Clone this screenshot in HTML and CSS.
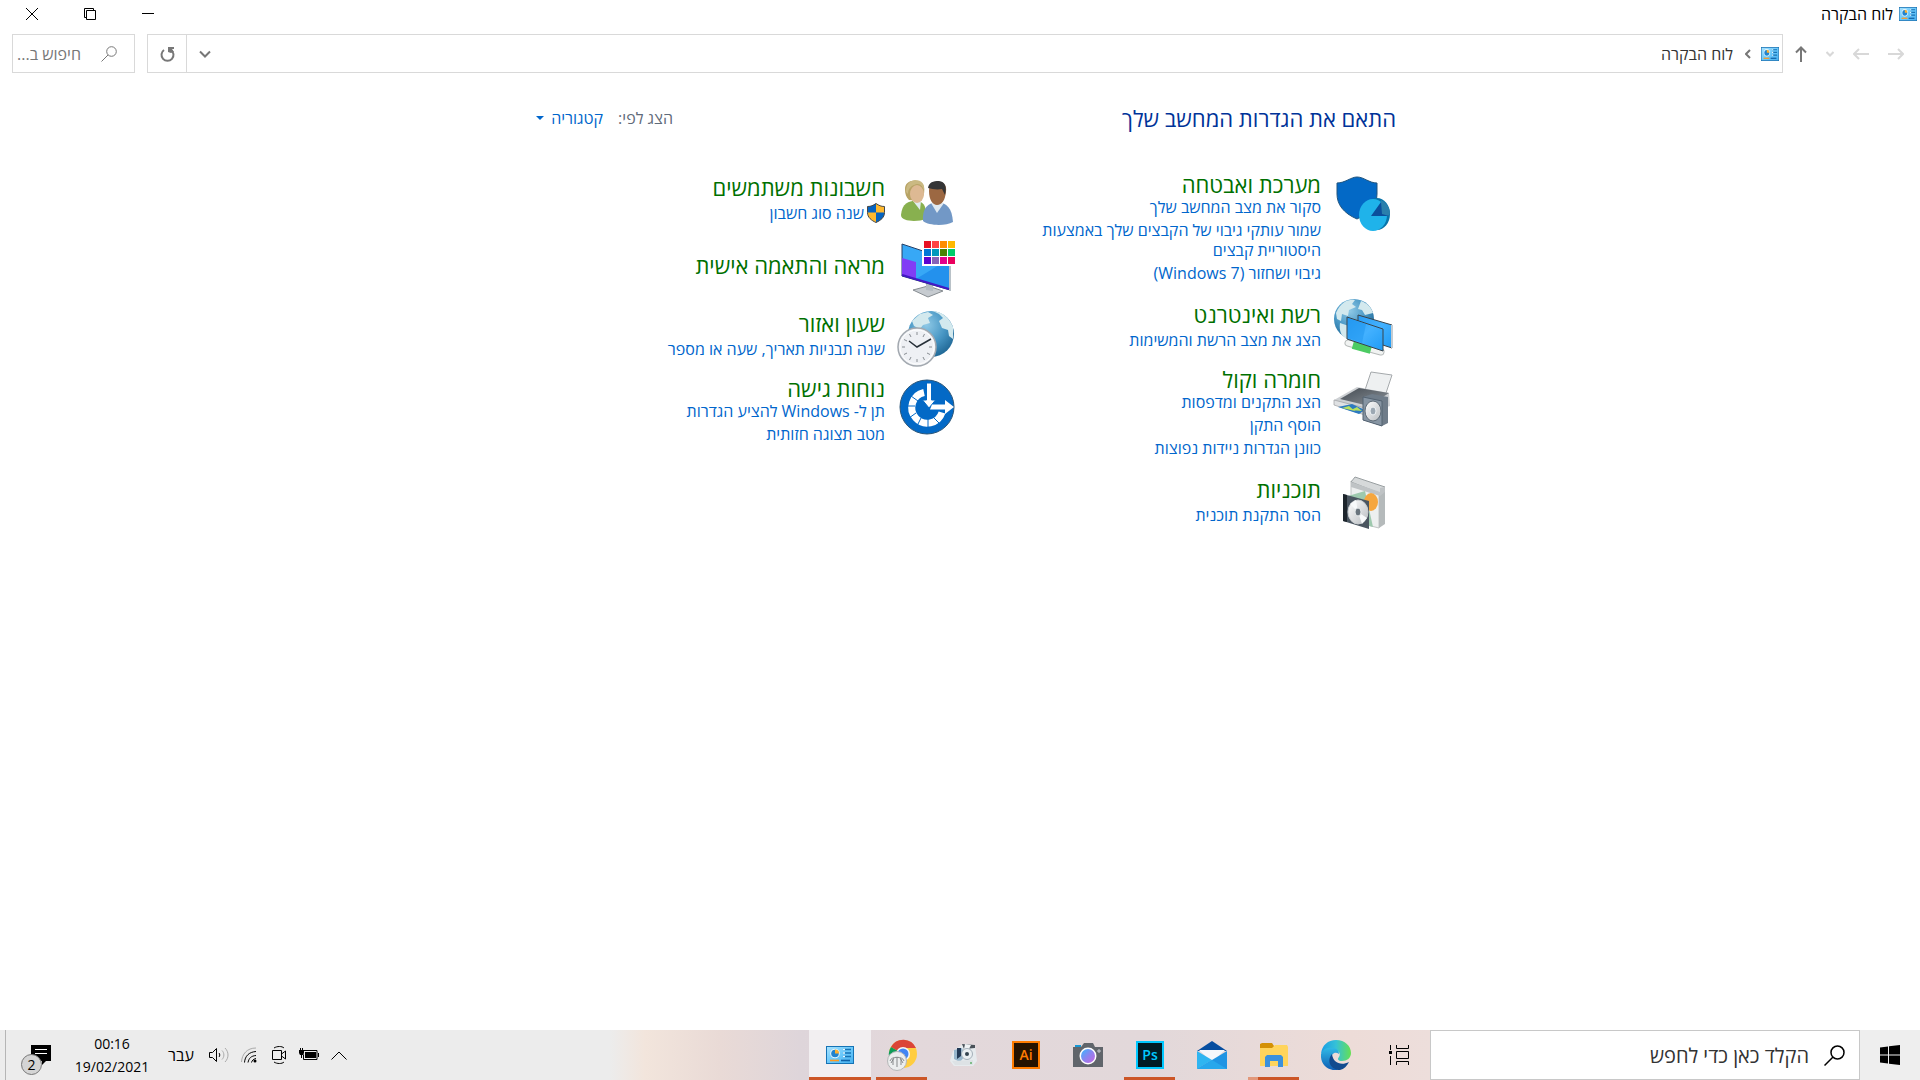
FILE: index.html
```
<!DOCTYPE html>
<html lang="he" dir="rtl">
<head>
    <meta charset="UTF-8">
    <meta name="viewport" content="width=device-width, initial-scale=1.0">
    <title>לוח הבקרה</title>
    <link rel="stylesheet" href="styles.css">
</head>
<body>
    <!-- Shared icons and gradients -->
    <svg class="defs" aria-hidden="true">
        <defs>
            <linearGradient id="panelBlue" x1="0" y1="0" x2="1" y2="1">
                <stop offset="0" stop-color="#a8e3ff"/><stop offset=".5" stop-color="#6cc9fb"/><stop offset="1" stop-color="#45b0f0"/>
            </linearGradient>
            <radialGradient id="globeBlue" cx=".4" cy=".3" r=".75">
                <stop offset="0" stop-color="#8fc9e6"/><stop offset=".55" stop-color="#4796c4"/><stop offset="1" stop-color="#1d6492"/>
            </radialGradient>
            <linearGradient id="screenBlue" x1="0" y1="0" x2="1" y2="1">
                <stop offset="0" stop-color="#2b9df4"/><stop offset=".5" stop-color="#43b1ff"/><stop offset="1" stop-color="#1f9bf5"/>
            </linearGradient>
            <linearGradient id="silver" x1="0" y1="0" x2="1" y2="1">
                <stop offset="0" stop-color="#ffffff"/><stop offset="1" stop-color="#b9bdc1"/>
            </linearGradient>
            <linearGradient id="darkMetal" x1="0" y1="0" x2="1" y2="1">
                <stop offset="0" stop-color="#444b52"/><stop offset="1" stop-color="#8d949b"/>
            </linearGradient>
        </defs>
        <symbol id="icon-panel" viewBox="0 0 28 18" preserveAspectRatio="none">
            <rect x=".5" y=".5" width="27" height="17" fill="url(#panelBlue)" stroke="#1673b5"/>
            <circle cx="9" cy="7.500" r="4.800" fill="#e8f7ff"/>
            <circle cx="9" cy="7.500" r="3.800" fill="#1f83cf"/>
            <path d="M9 7.500V3.500a4 4 0 0 1 4 4z" fill="#ffb02e"/>
            <path d="M17 3.500h8M17 7h8M17 10.500h8" stroke="#1673b5" stroke-width="1.500"/>
            <path d="M17 3.500h2M17 7h2M17 10.500h2" stroke="#e8f7ff" stroke-width="1.500"/>
            <path d="M4 14.500h9" stroke="#ff9a1f" stroke-width="1.600"/>
            <path d="M15 14.500h9" stroke="#0f62a8" stroke-width="1.600"/>
        </symbol>
    </svg>

    <header class="title-bar">
        <svg class="panel-icon"><use href="#icon-panel"/></svg>
        <h1 class="title-bar-text">לוח הבקרה</h1>
        <div class="window-buttons">
            <button class="window-button" aria-label="מזער"><svg width="12" height="12" viewBox="0 0 12 12"><path d="M0 5.500h12"/></svg></button>
            <button class="window-button" aria-label="שחזר"><svg width="12" height="12" viewBox="0 0 12 12"><path d="M2.500 2.500h9v9h-9zM.5 9.500v-9h9v2M.5 9.500h2"/></svg></button>
            <button class="window-button" aria-label="סגור"><svg width="12" height="12" viewBox="0 0 12 12"><path d="M0 0l12 12M12 0L0 12"/></svg></button>
        </div>
    </header>

    <nav class="nav-bar">
        <div class="nav-buttons">
            <button class="nav-button" aria-label="קדימה"><svg width="16" height="12" viewBox="0 0 16 12"><path d="M0 6h15M10 1l5 5-5 5"/></svg></button>
            <button class="nav-button" aria-label="אחורה"><svg width="16" height="12" viewBox="0 0 16 12"><path d="M16 6H1M6 1L1 6l5 5"/></svg></button>
            <button class="nav-button" aria-label="מיקומים אחרונים"><svg width="8" height="6" viewBox="0 0 8 6"><path d="M.5 1L4 4.500 7.500 1"/></svg></button>
            <button class="nav-button up" aria-label="למעלה"><svg width="12" height="16" viewBox="0 0 12 16"><path d="M6 16V1.500M1 6.500l5-5 5 5"/></svg></button>
        </div>
        <div class="address">
            <svg class="panel-icon"><use href="#icon-panel"/></svg>
            <svg class="crumb-arrow" width="6" height="10" viewBox="0 0 6 10"><path d="M1 1l4 4-4 4"/></svg>
            <a class="crumb" href="#">לוח הבקרה</a>
            <button class="address-drop" aria-label="מיקומים קודמים"><svg width="12" height="8" viewBox="0 0 12 8"><path d="M1 1.500l5 5 5-5"/></svg></button>
            <button class="address-refresh" aria-label="רענן"><svg width="15" height="16" viewBox="0 0 15 16"><path d="M4 4a6 6 0 1 0 7 0"/><path class="fill" d="M8 1h6v2h-2l2 3-3 1-3-1z"/></svg></button>
        </div>
        <label class="panel-search">
            <svg width="16" height="16" viewBox="0 0 16 16"><circle cx="10.500" cy="5.500" r="4.800"/><path d="M7 9L.5 15.500"/></svg>
            <input type="text" placeholder="חיפוש ב..." aria-label="חיפוש בלוח הבקרה">
        </label>
    </nav>

    <main class="content">
        <div class="panel">
            <div class="panel-header">
                <h2 class="panel-title">התאם את הגדרות המחשב שלך</h2>
                <div class="view-by">
                    <span>הצג לפי:</span>
                    <button class="view-button">קטגוריה <svg width="8" height="4" viewBox="0 0 8 4"><path d="M0 0h8L4 4z"/></svg></button>
                </div>
            </div>

            <div class="columns">
                <div class="column">
                    <section class="category multi">
                        <svg class="category-icon" viewBox="0 0 60 60">
                            <path d="M4 9c8 0 14-6 20-6 7 0 12 6 20 6v11c0 13-8 19-20 25C10 39 4 30 4 20z" fill="#0369c6" stroke="#21557e"/>
                            <ellipse cx="44" cy="40" rx="13" ry="16" fill="#0874a9"/>
                            <ellipse cx="40" cy="41" rx="14" ry="16" fill="#1fb3ea"/>
                            <path d="M48 26c6 3 9 8 9 14l-2 2-8-1z" fill="#2a7fac"/>
                            <path d="M38 42l10-14 1 12 7 2z" fill="#0b4f9c"/>
                        </svg>
                        <div class="category-text">
                            <h3><a href="#">מערכת ואבטחה</a></h3>
                            <a href="#">סקור את מצב המחשב שלך</a>
                            <a href="#">שמור עותקי גיבוי של הקבצים שלך באמצעות היסטוריית קבצים</a>
                            <a href="#">גיבוי ושחזור (Windows 7)</a>
                        </div>
                    </section>

                    <section class="category">
                        <svg class="category-icon" viewBox="0 0 60 60">
                            <circle cx="21" cy="21" r="20" fill="url(#globeBlue)"/>
                            <path d="M3 15C8 4 15 1 22 2l-3 4 4 3-7 3-1 6-6-2-1 7-4-2zM7 25l9 3 3 6-5 7c-6-3-8-8-7-16zM28 3c6 2 10 6 12 12l-8 2-3-5-4-1z" fill="#d3e9ee"/>
                            <path d="M25 17l34 10v23L25 39z" fill="url(#screenBlue)" stroke="#39444c"/>
                            <path d="M59 27v23" stroke="#c4ccd2" stroke-width="2"/>
                            <path d="M15 45l33 9" stroke="#b6bab9" stroke-width="7" stroke-linecap="round"/>
                            <path d="M15 45l33 9" stroke="#f1f3f2" stroke-width="5" stroke-linecap="round"/>
                            <path d="M20 46.500l18 5" stroke="#4ccb63" stroke-width="9"/>
                            <path d="M14 19l36 12v22L14 41z" fill="url(#screenBlue)" stroke="#39444c"/>
                            <path d="M15 20l18 6-4 19-14-5z" fill="#1b93ed" opacity=".5"/>
                        </svg>
                        <div class="category-text">
                            <h3><a href="#">רשת ואינטרנט</a></h3>
                            <a href="#">הצג את מצב הרשת והמשימות</a>
                        </div>
                    </section>

                    <section class="category multi">
                        <svg class="category-icon" viewBox="0 0 60 60">
                            <path d="M38 3l21 3-8 24-20-6z" fill="#eef0f1" stroke="#a5a9ac"/>
                            <path d="M1 31l23-13 32 6 1 13-26 9z" fill="#cdd0d3"/>
                            <path d="M7 30l19-11 30 5-20 13z" fill="url(#darkMetal)"/>
                            <path d="M1 31l31 8v7L1 36z" fill="#dfe1e3" stroke="#9b9ea1" stroke-width=".7"/>
                            <path d="M5 38l14-3 13 6-6 4z" fill="#2c7ac0"/>
                            <path d="M9 39l7-2 6 5zM18 41l6-3 5 4z" fill="#b7e05e"/>
                            <path d="M30 28l9-3 16 3v26l-6 3-19-6z" fill="#6f7c89"/>
                            <path d="M30 28l19 4v25l-19-6z" fill="#8795a3" stroke="#536271"/>
                            <ellipse cx="40" cy="42" rx="8" ry="10" fill="url(#silver)" stroke="#5e6b77"/>
                            <ellipse cx="40" cy="42" rx="3" ry="4" fill="#9ca8b3" stroke="#eef2f5"/>
                        </svg>
                        <div class="category-text">
                            <h3><a href="#">חומרה וקול</a></h3>
                            <a href="#">הצג התקנים ומדפסות</a>
                            <a href="#">הוסף התקן</a>
                            <a href="#">כוונן הגדרות ניידות נפוצות</a>
                        </div>
                    </section>

                    <section class="category">
                        <svg class="category-icon" viewBox="0 0 60 60">
                            <path d="M18 8l28 10v37l-28-7z" fill="#edefef" stroke="#c1c4c4"/>
                            <path d="M46 18l6-3v36l-6 4z" fill="#b5babb"/>
                            <path d="M18 9l4-5 30 10-6 6z" fill="#d6d9da" stroke="#999fa1"/>
                            <path d="M18 9l29 10v-4l5-1v5l-5 4-29-9z" fill="#bfc3c5"/>
                            <path d="M15 23l17-5 8 36-20-6z" fill="#9ec9ae"/>
                            <ellipse cx="38" cy="29" rx="7" ry="9" fill="#f5a63e"/>
                            <path d="M10 21l26 7v28l-26-8z" fill="#4a5560"/>
                            <path d="M10 21l4 1v27l-4-1z" fill="#1d252c"/>
                            <ellipse cx="25" cy="39" rx="10" ry="12" fill="url(#silver)" stroke="#c9cdd0"/>
                            <path d="M25 39l-8-8 6-4zM25 39l9 6-5 6z" fill="#f8fafb"/>
                            <ellipse cx="25" cy="39" rx="3" ry="4" fill="#69747d" stroke="#e5e9eb"/>
                        </svg>
                        <div class="category-text">
                            <h3><a href="#">תוכניות</a></h3>
                            <a href="#">הסר התקנת תוכנית</a>
                        </div>
                    </section>
                </div>

                <div class="column">
                    <section class="category">
                        <svg class="category-icon" viewBox="0 0 60 60">
                            <path d="M8 18c0-6 5-9 11-8 8 1 9 6 8 13l-3 7-12-1c-3-3-4-6-4-11z" fill="#b7a365"/>
                            <path d="M4 44c1-12 8-14 14-14 8 0 11 4 11 13v5c-8 3-25 3-25-4z" fill="#88b04f"/>
                            <path d="M16 30h8l-1 9z" fill="#e2edf0"/>
                            <ellipse cx="20" cy="23" rx="7" ry="9" fill="#ddb993"/>
                            <path d="M11 23c0-6 4-9 9-10 4 0 6 3 7 7 1-7-2-11-9-11-7 1-9 6-9 12z" fill="#cab982"/>
                            <path d="M26 50c-1-13 5-18 14-19 10 1 15 6 16 20-7 4-24 4-30-1z" fill="#7298c6"/>
                            <path d="M34 32h13l-7 10z" fill="#dfe9f1"/>
                            <path d="M32 20c0-7 4-9 9-9 6 0 9 3 8 10-1 8-4 13-9 13-4 0-8-5-8-14z" fill="#9c6842"/>
                            <path d="M31 17c1-6 5-7 11-7 6 1 8 5 6 14l-3-6c-5 1-10 0-14-1z" fill="#343536"/>
                        </svg>
                        <div class="category-text">
                            <h3><a href="#">חשבונות משתמשים</a></h3>
                            <a class="shielded" href="#"><svg width="18" height="20" viewBox="0 0 18 20"><path d="M9 .5c3 2 5 3 8.500 3v6c0 5-4 8-8.500 10-4.500-2-8.500-5-8.500-10v-6C4 3.500 6 2.500 9 .5z" fill="#ffb92e"/><path d="M9 .5v9H.5v-6C4 3.500 6 2.500 9 .5zM9 9.500h8.500c0 5-4 8-8.500 10z" fill="#0563c1"/><path d="M9 .5c3 2 5 3 8.500 3v6c0 5-4 8-8.500 10-4.500-2-8.500-5-8.500-10v-6C4 3.500 6 2.500 9 .5z" fill="none" stroke="#45484a"/></svg>שנה סוג חשבון</a>
                        </div>
                    </section>

                    <section class="category single">
                        <svg class="category-icon" viewBox="0 0 60 60">
                            <path d="M16 51l15-4 15 5-15 6z" fill="#c6cbd0" stroke="#878d92"/>
                            <path d="M29 40l7 2v10l-7-1z" fill="#b3bbc2"/>
                            <path d="M5 5l48 16v30L5 37z" fill="#37a8f6" stroke="#243f67"/>
                            <path d="M53 20v32" stroke="#b9c2c8" stroke-width="2"/>
                            <path d="M5 19l14 4v17L5 36z" fill="#813df5"/>
                            <path d="M19 40l33-20v30z" fill="#2391ed"/>
                            <path d="M5 36l47 14" stroke="#4318c6" stroke-width="2"/>
                            <path d="M25 1h34v26H25z" fill="#fff"/>
                            <g>
                                <path d="M27 2h7v7h-7z" fill="#e81224"/><path d="M35 2h7v7h-7z" fill="#ff4343"/><path d="M43 2h7v7h-7z" fill="#ff8c00"/><path d="M51 2h7v7h-7z" fill="#ffb900"/>
                                <path d="M27 10h7v7h-7z" fill="#0078d7"/><path d="M35 10h7v7h-7z" fill="#0099bc"/><path d="M43 10h7v7h-7z" fill="#498205"/><path d="M51 10h7v7h-7z" fill="#00cc6a"/>
                                <path d="M27 18h7v7h-7z" fill="#5c05d0"/><path d="M35 18h7v7h-7z" fill="#8764b8"/><path d="M43 18h7v7h-7z" fill="#e3008c"/><path d="M51 18h7v7h-7z" fill="#ea005e"/>
                            </g>
                        </svg>
                        <div class="category-text">
                            <h3><a href="#">מראה והתאמה אישית</a></h3>
                        </div>
                    </section>

                    <section class="category">
                        <svg class="category-icon" viewBox="0 0 60 60">
                            <circle cx="34" cy="27" r="23" fill="url(#globeBlue)"/>
                            <path d="M15 14l8-7 8-2 5 3-5 3 2 5-7 2-3 4-6-3zM36 4c9 1 16 6 20 16v12l-4-3-1-6-6-2-3-7 4-3-4-4z" fill="#d3e9ee"/>
                            <circle cx="20" cy="40" r="19" fill="#eef0f4" stroke="#a2a8af" stroke-width="1.500"/>
                            <circle cx="20" cy="40" r="17" fill="none" stroke="#fff"/>
                            <path d="M20 25v3M20 52v3M5 40h3M32 40h3M12.500 27l1.500 3M26 50l1.500 3M7 32.500l3 1.500M30 46l3 1.500M27.500 27L26 30M14 50l-1.500 3M10 46l-3 1.500" stroke="#888d92"/>
                            <path d="M12 34l8 6 14-8" fill="none" stroke="#273039" stroke-width="1.500"/>
                        </svg>
                        <div class="category-text">
                            <h3><a href="#">שעון ואזור</a></h3>
                            <a href="#">שנה תבניות תאריך, שעה או מספר</a>
                        </div>
                    </section>

                    <section class="category multi">
                        <svg class="category-icon" viewBox="0 0 60 60">
                            <circle cx="30" cy="29" r="27" fill="#0369c6" stroke="#2a5578"/>
                            <path d="M27 14.500a15.500 15.500 0 1 0 18 20" fill="none" stroke="#fff" stroke-width="7"/>
                            <path d="M8 28h10M12 40l7-5M20 48l4-8M31 50v-9M42 45l-6-6M14 18l7 5" stroke="#0369c6"/>
                            <path d="M29.500 5h5v17h4l-6.500 8-6.500-8h4z" fill="#fff" stroke="#0369c6"/>
                            <path d="M35 26.500h13v-4.500l9 7-9 7v-4.500H33z" fill="#fff"/>
                        </svg>
                        <div class="category-text">
                            <h3><a href="#">נוחות גישה</a></h3>
                            <a href="#">תן ל- Windows להציע הגדרות</a>
                            <a href="#">מטב תצוגה חזותית</a>
                        </div>
                    </section>
                </div>
            </div>
        </div>
    </main>

    <footer class="taskbar">
        <button class="start" aria-label="התחל"><svg width="20" height="20" viewBox="0 0 20 20"><path d="M0 2.500L8 1.500V9.500H0zM9 1.300L20 0v9.500H9zM0 10.500h8v8l-8-1zM9 10.500h11V20L9 18.700z"/></svg></button>
        <label class="task-search">
            <svg width="21" height="21" viewBox="0 0 21 21"><circle cx="13.500" cy="7.500" r="6.500"/><path d="M9 12L.5 20.500"/></svg>
            <input type="text" placeholder="הקלד כאן כדי לחפש" aria-label="חיפוש">
        </label>
        <button class="task-view" aria-label="תצוגת משימות"><svg width="20" height="20" viewBox="0 0 20 20"><path d="M7.500 0v3.500h12V0M7.500 20v-3.500h12V20M7.500 6.500h12v7h-12zM1.500 0v5M1.500 11v9"/><path class="fill" d="M0 6h3v3H0z"/></svg></button>

        <div class="apps">
            <button class="app" aria-label="Edge">
                <svg width="30" height="30" viewBox="0 0 30 30">
                    <defs>
                        <linearGradient id="edgeTop" x1="0" y1="0" x2="1" y2="0"><stop offset="0" stop-color="#1a9de5"/><stop offset=".5" stop-color="#35c1d8"/><stop offset="1" stop-color="#66e052"/></linearGradient>
                        <linearGradient id="edgeSide" x1="0" y1="0" x2="0" y2="1"><stop offset="0" stop-color="#30b9e6"/><stop offset="1" stop-color="#0e5cb3"/></linearGradient>
                    </defs>
                    <path d="M0 14C1 5 7 0 15 0c9 0 15 6 15 13 0 5-4 8-9 8-4 0-5-2-3-4 3-5-3-8-8-7-5 0-9 2-10 4z" fill="url(#edgeTop)"/>
                    <path d="M0 14c2-5 6-7 11-6 4 0 7 2 7 6-4-3-8 0-8 5 0 6 4 10 9 11C8 32-1 25 0 14z" fill="url(#edgeSide)"/>
                    <path d="M11 14c-6 7-1 16 8 16 4-1 7-4 9-8-8 4-16 1-17-8z" fill="#114a8f"/>
                </svg>
            </button>
            <button class="app running stacked" aria-label="סייר הקבצים">
                <svg width="28" height="24" viewBox="0 0 28 24">
                    <path d="M0 1l2-1h10l2 3v3H0z" fill="#d49105"/>
                    <path d="M0 5h12l3-3h12l1 2v19H0z" fill="#ffd45c"/>
                    <path d="M5 24V14l2-2h14l2 2v10h-5v-6h-8v6z" fill="#3b91dd"/>
                </svg>
            </button>
            <button class="app" aria-label="דואר">
                <svg width="30" height="28" viewBox="0 0 30 28">
                    <path d="M0 10L15 0l15 10z" fill="#074ea0"/>
                    <path d="M2 9h26L15 21z" fill="#f4f7fb"/>
                    <path d="M0 10l15 9-15 9z" fill="#2fb5f1"/><path d="M30 10L0 28h30z" fill="#1f94e3"/><path d="M0 28l15-9 15 9z" fill="#27a7ec"/>
                </svg>
            </button>
            <button class="app running" aria-label="Photoshop">
                <svg width="28" height="28" viewBox="0 0 28 28"><rect x="1" y="1" width="26" height="26" fill="#001d26" stroke="#00c8ff" stroke-width="2"/><text x="14" y="19" fill="#00c8ff" class="app-letters">Ps</text></svg>
            </button>
            <button class="app" aria-label="מצלמה">
                <svg width="30" height="24" viewBox="0 0 30 24">
                    <defs><linearGradient id="lens" x1="0" y1="0" x2="1" y2="1"><stop offset="0" stop-color="#35b8ff"/><stop offset=".5" stop-color="#8c84f0"/><stop offset="1" stop-color="#c865df"/></linearGradient></defs>
                    <path d="M2 2h6v3H2z" fill="#1597d4"/>
                    <path d="M0 4h8l3-4h9l2 4h8v20H0z" fill="#60656b"/>
                    <circle cx="15" cy="13" r="8.500" fill="#fff"/><circle cx="15" cy="13" r="7" fill="url(#lens)"/><path d="M26 6v4M24 8h4" stroke="#c3c8cd"/>
                </svg>
            </button>
            <button class="app" aria-label="Illustrator">
                <svg width="28" height="28" viewBox="0 0 28 28"><rect x="1" y="1" width="26" height="26" fill="#261300" stroke="#ff7c00" stroke-width="2"/><text x="14" y="19" fill="#ff7c00" class="app-letters">Ai</text></svg>
            </button>
            <button class="app" aria-label="כלי צילום">
                <svg width="28" height="24" viewBox="0 0 28 24">
                    <path d="M3 8l10-7 12 1 2 16-4 5H4l-4-5z" fill="#e6ebee"/>
                    <path d="M12 1l13 1v3L14 6z" fill="#4a5259"/><path d="M15 1l6 1-2 4h-5z" fill="#eef2f4"/>
                    <path d="M4 7l8-2 3 8-5 6-6-3z" fill="#97b6cc"/><path d="M7 5h4v8l-4 3z" fill="#233a56"/>
                    <circle cx="17" cy="11" r="5.500" fill="#e9eef1" stroke="#a5b1ba"/><circle cx="17" cy="11" r="2" fill="#33434f"/>
                    <path d="M2 18l21-1v5H5z" fill="#dde2e5"/><circle cx="21" cy="20" r="1" fill="#62b06a"/>
                </svg>
            </button>
            <button class="app running" aria-label="Chrome">
                <svg width="32" height="32" viewBox="0 0 32 32">
                    <circle cx="17" cy="15" r="14" fill="#ffcd40"/>
                    <path d="M17 15L5 8a14 14 0 0 1 25 1H17z" fill="#db4437"/>
                    <path d="M17 15L5 8a14 14 0 0 0 8 21z" fill="#0f9d58"/>
                    <circle cx="17" cy="15" r="7" fill="#f4f6f7"/><circle cx="17" cy="15" r="5.500" fill="#4285f4"/>
                    <circle cx="11" cy="22" r="9.500" fill="#eceeee" stroke="#b5b7b8"/>
                    <path d="M4 22c1-5 13-5 14 0M7 20v6M11 18v10M15 20v6M5 24l3-5M17 24l-3-5" fill="none" stroke="#85888a"/>
                </svg>
            </button>
            <button class="app running active" aria-label="לוח הבקרה">
                <svg width="28" height="18"><use href="#icon-panel"/></svg>
            </button>
        </div>

        <div class="tray">
            <button class="tray-button" aria-label="הצג סמלים מוסתרים"><svg width="16" height="9" viewBox="0 0 16 9"><path d="M.5 8.500L8 1l7.500 7.500"/></svg></button>
            <button class="tray-button" aria-label="סוללה"><svg width="20" height="14" viewBox="0 0 20 14"><path d="M5 2.500h13v9H4.500v-5M19.500 5v4M1.500 0v3M3.500 0v3M2.500 6v4"/><path class="fill" d="M6 4h11v6H6zM0 2h5v3L4 7H1L0 5z"/></svg></button>
            <button class="tray-button" aria-label="הצג פגישה"><svg width="15" height="18" viewBox="0 0 15 18"><path d="M.5 4.500h9v9h-9zM9.500 8l4-3v8l-4-3M2 2c3-2 8-2 10 0M2 16c3 2 8 2 10 0"/></svg></button>
            <button class="tray-button" aria-label="רשת"><svg width="16" height="16" viewBox="0 0 16 16"><path class="faint" d="M.5 15C1 7 6 1 15 1"/><path d="M3.500 15.500C4 9 8 5 15 4.500M7 15.500C8 11 10 9 15 8.500M10.500 15.500c.5-2 2-3.500 4.500-4"/><circle class="fill" cx="14" cy="14" r="1.500"/></svg></button>
            <button class="tray-button" aria-label="עוצמת קול"><svg width="20" height="16" viewBox="0 0 20 16"><path d="M.5 5.500h3l4-4v13l-4-4h-3zM10 6c1 1 1 3 0 4"/><path class="faint" d="M13 3.500c2.500 2.500 2.500 6.500 0 9M16 1c4 4 4 10 0 14"/></svg></button>
            <button class="language">עבר</button>
            <button class="clock"><span>00:16</span><span>19/02/2021</span></button>
            <button class="notifications" aria-label="התראות">
                <svg width="20" height="20" viewBox="0 0 20 20"><path class="fill" d="M0 0h20v16h-5l-4 4v-4H0z"/><path class="lines" d="M4 4.500h12M4 8.500h12"/></svg>
                <span class="badge">2</span>
            </button>
            <button class="show-desktop" aria-label="הצג שולחן עבודה"></button>
        </div>
    </footer>
</body>
</html>
```

FILE: styles.css
```
/* Control panel, right to left */
:root {
    --heading: #003399;
    --category: #007000;
    --link: #0066cc;
    --border: #d9d9d9;
    --accent: #cc5627;
}

* {
    box-sizing: border-box;
}

body {
    font-family: 'Open Sans', 'Noto Sans', 'Liberation Sans', sans-serif;
    font-size: 16px;
    margin: 0;
    background: #fff;
    color: #000;
    display: flex;
    flex-direction: column;
    min-height: 100vh;
}

button {
    font: inherit;
    color: inherit;
    background: none;
    border: 0;
    padding: 0;
}

button, a {
    cursor: pointer;
}

a {
    text-decoration: none;
}

input {
    font: inherit;
    border: 0;
    outline: 0;
    padding: 0;
    min-width: 0;
    flex: 1;
    background: none;
}

svg {
    display: block;
    flex: none;
}

.defs {
    position: absolute;
    width: 0;
    height: 0;
}

/* Title bar */
.title-bar {
    display: flex;
    align-items: center;
    height: 28px;
    padding: 0 3px;
    gap: 6px;
}

.title-bar-text {
    font-size: 16px;
    font-weight: normal;
    margin: 0;
}

.panel-icon {
    width: 18px;
    height: 14px;
}

.window-buttons {
    display: flex;
    margin-right: auto;
}

.window-button {
    width: 58px;
    height: 28px;
    display: flex;
    align-items: center;
    justify-content: center;
}

.window-button path {
    fill: none;
    stroke: #000;
}

/* Navigation */
.nav-bar {
    display: flex;
    align-items: center;
    gap: 12px;
    padding: 6px 12px 0 12px;
}

.nav-buttons {
    display: flex;
    align-items: center;
    gap: 19px;
    padding-right: 4px;
}

.nav-button path {
    fill: none;
    stroke: #d8d8d8;
    stroke-width: 2;
}

.nav-button.up path {
    stroke: #777;
}

.address {
    flex: 1;
    display: flex;
    align-items: center;
    height: 39px;
    border: 1px solid var(--border);
    padding-right: 3px;
}

.crumb-arrow {
    margin: 0 10px 0 12px;
    transform: scaleX(-1);
}

.address path {
    fill: none;
    stroke: #777;
    stroke-width: 2;
}

.address .fill {
    fill: #777;
    stroke: none;
}

.crumb {
    color: #333;
}

.address-drop {
    width: 36px;
    height: 37px;
    margin-right: auto;
    display: flex;
    align-items: center;
    justify-content: center;
}

.address-refresh {
    width: 39px;
    height: 37px;
    border-right: 1px solid var(--border);
    display: flex;
    align-items: center;
    justify-content: center;
}

.panel-search {
    width: 123px;
    height: 39px;
    border: 1px solid var(--border);
    display: flex;
    align-items: center;
    gap: 20px;
    padding: 0 17px 0 3px;
}

.panel-search svg {
    fill: none;
    stroke: #777;
}

.panel-search input::placeholder {
    color: #777;
    opacity: 1;
}

/* Content */
.content {
    flex: 1;
}

.panel {
    max-width: 872px;
    margin: 0 auto;
    padding-top: 30px;
}

.panel-header {
    display: grid;
    grid-template-columns: 1fr 149px;
    align-items: center;
    height: 30px;
    margin-bottom: 38px;
}

.panel-title {
    font-size: 22px;
    font-weight: normal;
    color: var(--heading);
    margin: 0;
}

.view-by {
    display: flex;
    gap: 15px;
    color: #5f6b7a;
    white-space: nowrap;
}

.view-button {
    display: flex;
    align-items: center;
    gap: 7px;
    color: var(--link);
}

.view-button svg {
    fill: var(--link);
}

.columns {
    display: grid;
    grid-template-columns: 1fr 1fr;
}

.category {
    display: flex;
    gap: 12px;
    padding: 0 3px 8px 0;
}

.category.multi {
    padding-bottom: 15px;
}

.category-icon {
    width: 60px;
    height: 60px;
}

.category.multi .category-icon {
    margin-top: 3px;
}

.category-text {
    display: flex;
    flex-direction: column;
    align-items: flex-start;
    gap: 3px;
    max-width: 300px;
    line-height: 20px;
    padding-top: 3px;
}

.category.multi .category-text {
    padding-top: 0;
}

.category.single .category-text {
    padding-top: 13px;
}

.category-text a {
    color: var(--link);
}

.category-text h3 {
    font-size: 22px;
    font-weight: normal;
    line-height: 26px;
    margin: 0;
}

.category.multi h3 {
    margin-bottom: -3px;
}

.category-text h3 a {
    color: var(--category);
}

.shielded {
    display: flex;
    gap: 3px;
}

/* Taskbar */
.taskbar {
    display: flex;
    height: 50px;
    background: linear-gradient(to right, #ececec 0, #ececec 610px, #f2e5dc 645px, #e9dad6 720px, #ded5da 800px, #e3d8db 900px, #e2d8da 1150px, #eddcd8 1350px, #eddedb 1430px, #eee 1600px);
}

.start {
    width: 60px;
    display: flex;
    align-items: center;
    justify-content: center;
}

.task-search {
    width: 430px;
    background: #fff;
    border: 1px solid #c8c8c8;
    display: flex;
    align-items: center;
    gap: 15px;
    padding: 0 14px;
    font-size: 20px;
}

.task-search svg {
    fill: none;
    stroke: #000;
    stroke-width: 1.500;
}

.task-search input::placeholder {
    color: #333;
    opacity: 1;
}

.task-view {
    width: 63px;
    display: flex;
    align-items: center;
    justify-content: center;
}

.task-view path {
    fill: none;
    stroke: #000;
}

.task-view .fill {
    fill: #000;
    stroke: none;
}

.apps {
    display: flex;
}

.app {
    position: relative;
    width: 62px;
    height: 50px;
    display: flex;
    align-items: center;
    justify-content: center;
}

.app.running::after {
    content: '';
    position: absolute;
    bottom: 0;
    left: 5px;
    right: 6px;
    height: 3px;
    background: var(--accent);
}

.app.stacked::after {
    background: linear-gradient(to right, #e2987b 10px, var(--accent) 10px);
}

.app.active {
    background: #f2eff1;
}

.app.active::after {
    left: 0;
    right: 0;
}

.app-letters {
    font-size: 14px;
    font-weight: 600;
    text-anchor: middle;
    direction: ltr;
}

.tray {
    display: flex;
    align-items: stretch;
    margin-right: auto;
}

.tray-button {
    width: 30px;
    display: flex;
    align-items: center;
    justify-content: center;
}

.tray path {
    fill: none;
    stroke: #000;
}

.tray .faint {
    stroke: #aaa;
}

.tray .fill {
    fill: #000;
    stroke: none;
}

.tray .lines {
    stroke: #fff;
}

.language {
    width: 46px;
}

.clock {
    width: 92px;
    display: flex;
    flex-direction: column;
    align-items: center;
    justify-content: center;
    font-size: 14px;
    line-height: 23px;
}

.notifications {
    position: relative;
    width: 60px;
    display: flex;
    align-items: center;
    justify-content: center;
    padding-left: 10px;
    font-size: 14px;
}

.badge {
    position: absolute;
    left: 15px;
    bottom: 5px;
    width: 21px;
    height: 21px;
    border: 1px solid #777;
    border-radius: 50%;
    background: #d4d4d4;
    line-height: 19px;
}

.show-desktop {
    width: 6px;
    border-right: 1px solid #b5b5b5;
}
```
